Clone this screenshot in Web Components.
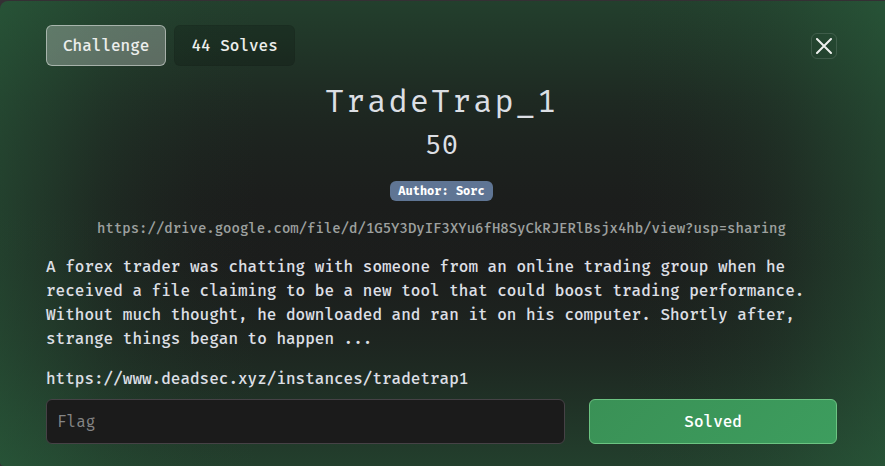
<!DOCTYPE html>
<html lang="en">
<head>
<meta charset="utf-8">
<title>TradeTrap_1</title>
<style>
  body {
    margin: 0;
    background: #343034;
    color: #dcdfe4;
    font: 500 16px/24px "Fira Mono", "Fira Code", "Liberation Mono", monospace;
  }
</style>
</head>
<body>
<challenge-dialog>
  <challenge-tabs slot="header"></challenge-tabs>
  <close-button slot="header"></close-button>
  <challenge-heading points="50" author="Author: Sorc">TradeTrap_1</challenge-heading>
  <challenge-description>
    <a slot="resource" href="#file">https://drive.google.com/file/d/1G5Y3DyIF3XYu6fH8SyCkRJERlBsjx4hb/view?usp=sharing</a>
    <span>A forex trader was chatting with someone from an online trading group when he received a file claiming to be a new tool that could boost trading performance. Without much thought, he downloaded and ran it on his computer. Shortly after, strange things began to happen ...</span>
    <span slot="instance">https://www.deadsec.xyz/instances/tradetrap1</span>
  </challenge-description>
  <flag-form></flag-form>
</challenge-dialog>
<script>
  function define(name, markup, setup) {
    const template = document.createElement("template");
    template.innerHTML = markup;
    customElements.define(name, class extends HTMLElement {
      constructor() {
        super();
        this.attachShadow({ mode: "open" }).append(template.content.cloneNode(true));
      }
      connectedCallback() {
        if (setup) setup(this);
      }
    });
  }

  define("challenge-dialog", `
    <style>
      :host { display: block; padding-top: 1px; }
      /* Green glow that fades inwards from all four edges. */
      section {
        --fade: rgb(44 106 66 / .46) 0, rgb(44 106 66 / .39) 25px, rgb(44 106 66 / .32) 50px,
          rgb(44 106 66 / .25) 75px, rgb(44 106 66 / .18) 100px, rgb(44 106 66 / .13) 125px,
          rgb(44 106 66 / .09) 150px, rgb(44 106 66 / .03) 200px, rgb(44 106 66 / 0) 260px;
        box-sizing: border-box;
        min-height: calc(100vh - 1px);
        padding: 24px 48px 22px 46px;
        border-radius: 8px 0 0 4px;
        background:
          linear-gradient(to right, var(--fade)),
          linear-gradient(to left, var(--fade)),
          linear-gradient(to bottom, var(--fade)),
          linear-gradient(to top, var(--fade)),
          #1b1b1b;
      }
      header { display: flex; justify-content: space-between; align-items: center; margin-bottom: 16px; }
    </style>
    <section role="dialog" aria-label="Challenge">
      <header><slot name="header"></slot></header>
      <slot></slot>
    </section>`);

  define("challenge-tabs", `
    <style>
      :host { display: block; }
      nav { display: flex; gap: 8px; }
      button {
        font: inherit;
        line-height: 23px;
        color: #eceeec;
        padding: 8px 16px;
        border: 1px solid rgba(0, 0, 0, .06);
        border-radius: 6px;
        background: rgba(0, 0, 0, .16);
      }
      button[aria-selected="true"] {
        background: rgba(255, 255, 255, .27);
        border-color: rgba(255, 255, 255, .45);
      }
    </style>
    <nav role="tablist">
      <button type="button" role="tab" aria-selected="true">Challenge</button>
      <button type="button" role="tab" aria-selected="false">44 Solves</button>
    </nav>`);

  define("close-button", `
    <style>
      :host { display: block; }
      button {
        display: grid;
        place-items: center;
        width: 26px;
        height: 26px;
        padding: 0;
        border: 1px solid rgba(255, 255, 255, .12);
        border-radius: 6px;
        background: none;
        color: #eef0ee;
      }
      svg { display: block; }
    </style>
    <button type="button" aria-label="Close">
      <svg width="16" height="16" viewBox="0 0 16 16" fill="none" stroke="currentColor" stroke-width="2" stroke-linecap="round"><path d="M1 1L15 15M15 1L1 15"/></svg>
    </button>`);

  define("challenge-heading", `
    <style>
      :host { display: block; text-align: center; }
      h1, h2 { margin: 0; font-weight: 400; }
      h1 { font-size: 32px; line-height: 38px; letter-spacing: 2px; margin-bottom: 8px; }
      h2 { font-size: 28px; line-height: 34px; margin-bottom: 16px; }
      div { display: flex; justify-content: center; padding: 3px 0; margin-bottom: 14px; }
      .badge {
        padding: 4px 8px;
        border-radius: 6px;
        background: #5f7594;
        color: #fff;
        font-size: 12px;
        font-weight: 700;
        line-height: 12px;
      }
    </style>
    <h1><slot></slot></h1>
    <h2></h2>
    <div><span class="badge"></span></div>`,
    host => {
      host.shadowRoot.querySelector("h2").textContent = host.getAttribute("points");
      host.shadowRoot.querySelector(".badge").textContent = host.getAttribute("author");
    });

  define("challenge-description", `
    <style>
      :host { display: block; }
      p { margin: 0 0 16px; overflow-wrap: anywhere; }
      .resource { text-align: center; font-size: 14px; line-height: 21px; }
      .instance { margin-bottom: 8px; }
      ::slotted(a) { color: #9da09f; text-decoration: none; }
    </style>
    <p class="resource"><slot name="resource"></slot></p>
    <p><slot></slot></p>
    <p class="instance"><slot name="instance"></slot></p>`);

  define("flag-form", `
    <style>
      :host { display: block; }
      form { display: grid; grid-template-columns: minmax(0, 2fr) minmax(0, 1fr); margin: 0 -12px; }
      div { display: grid; padding: 0 12px; }
      input, button {
        box-sizing: border-box;
        width: 100%;
        font: inherit;
        line-height: 27px;
        padding: 8px 10px;
        border-radius: 6px;
      }
      input { border: 1px solid #464246; background: #1b1b1b; color: #dcdfe4; height: 45px; font-weight: 400; }
      input::placeholder { color: #858585; opacity: 1; }
      button { border: 1px solid #6cc482; background: linear-gradient(135deg, #3a9156, #3d9d5e); color: #fff; }
    </style>
    <form>
      <div><input type="text" aria-label="Flag" placeholder="Flag"></div>
      <div><button type="button">Solved</button></div>
    </form>`);
</script>
</body>
</html>
